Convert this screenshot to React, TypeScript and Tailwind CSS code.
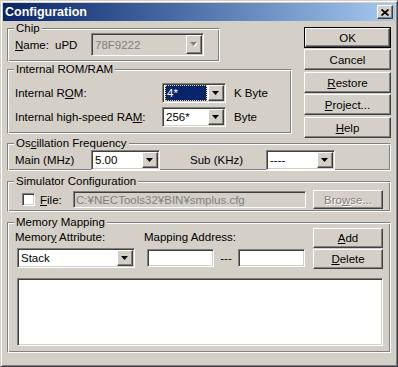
import React from 'react';

const SUNKEN =
  'border border-t-[#808080] border-l-[#808080] border-b-white border-r-white shadow-[inset_1px_1px_0_#404040,inset_-1px_-1px_0_#D4D0C8] p-[1px]';
const RAISED =
  'border border-t-white border-l-white border-b-[#404040] border-r-[#404040] shadow-[inset_-1px_-1px_0_#808080]';
const ETCHED =
  'border border-t-[#808080] border-l-[#808080] border-b-white border-r-white shadow-[inset_1px_1px_0_#fff,inset_-1px_-1px_0_#808080]';
const DISABLED_TEXT = 'text-[#808080] [text-shadow:1px_1px_0_#fff]';

function Arrow({ disabled }: { disabled?: boolean }) {
  return (
    <svg width="8" height="5" viewBox="0 0 8 5" className="block">
      {disabled && <polygon points="1,1 8,1 4.5,5" fill="#fff" />}
      <polygon points="0,0 7,0 3.5,4" fill={disabled ? '#808080' : '#000'} />
    </svg>
  );
}

function Combo({
  className,
  value,
  disabled,
  selected,
}: {
  className: string;
  value: string;
  disabled?: boolean;
  selected?: boolean;
}) {
  return (
    <div className={`${SUNKEN} flex items-stretch ${disabled ? 'bg-[#D4D0C8]' : 'bg-white'} ${className}`}>
      <div className="flex-1 flex items-center pl-[1px] pr-[1px] min-w-0">
        {selected ? (
          <div className="flex-1 h-full flex items-center bg-[#0A246A] text-white border border-dotted border-[#F2D98A] pl-[1px]">
            {value}
          </div>
        ) : (
          <span className={disabled ? 'text-[#808080] pl-[1px]' : 'pl-[1px]'}>{value}</span>
        )}
      </div>
      <div className={`${RAISED} w-[16px] bg-[#D4D0C8] flex items-center justify-center`}>
        <Arrow disabled={disabled} />
      </div>
    </div>
  );
}

function Button({
  className,
  children,
  isDefault,
  disabled,
}: {
  className: string;
  children: React.ReactNode;
  isDefault?: boolean;
  disabled?: boolean;
}) {
  const inner = (
    <div
      className={`${RAISED} h-full flex items-center justify-center bg-[#D4D0C8] ${disabled ? DISABLED_TEXT : ''}`}
    >
      {children}
    </div>
  );
  if (isDefault) {
    return <div className={`border border-black ${className}`}>{inner}</div>;
  }
  return <div className={className}>{inner}</div>;
}

function Group({
  title,
  className,
  innerClass,
  children,
}: {
  title: React.ReactNode;
  className: string;
  innerClass: string;
  children: React.ReactNode;
}) {
  return (
    <div className={`relative pt-[6px] flex flex-col ${className}`}>
      <div className={`${ETCHED} flex-1 ${innerClass}`}>{children}</div>
      <span className="absolute top-0 left-[7px] px-[2px] leading-[12px] bg-[#D4D0C8]">{title}</span>
    </div>
  );
}

export default function App() {
  return (
    <div className="w-[398px] h-[367px] bg-[#D4D0C8] font-['Liberation_Sans',Arial,sans-serif] text-[11.5px] text-black leading-[14px] select-none">
      <div className="w-full h-full border border-t-[#D4D0C8] border-l-[#D4D0C8] border-b-[#404040] border-r-[#404040] shadow-[inset_1px_1px_0_#fff,inset_-1px_-1px_0_#808080] p-[2px] flex flex-col">
        {/* title bar */}
        <div className="h-[18px] flex items-center justify-between bg-linear-to-r from-[#0A246A] to-[#A6CAF0] pl-[2px] pr-[2px]">
          <span className="text-white font-bold text-[12.5px] leading-[18px]">Configuration</span>
          <div className={`${RAISED} w-[16px] h-[14px] bg-[#D4D0C8] flex items-center justify-center`}>
            <svg width="8" height="7" viewBox="0 0 8 7" className="block">
              <path d="M0.5 0.5 L7.5 6.5 M7.5 0.5 L0.5 6.5" stroke="#000" strokeWidth="1.7" />
            </svg>
          </div>
        </div>

        <div className="pt-[1px] px-[4px] flex flex-col">
          {/* top area */}
          <div className="flex items-start gap-[12px] h-[112px]">
            <div className="w-[285px] flex flex-col">
              <Group title="Chip" className="w-[213px] h-[40px]" innerClass="pt-[4px]">
                <div className="flex items-center h-[23px] pl-[7px]">
                  <span className="w-[40px]">
                    <u>N</u>ame:
                  </span>
                  <span className="w-[36px]">uPD</span>
                  <Combo className="w-[113px] h-[23px]" value="78F9222" disabled />
                </div>
              </Group>

              <Group title="Internal ROM/RAM" className="w-[285px] h-[71px] mt-[1px]" innerClass="pt-[13px] flex flex-col gap-[4px]">
                <div className="flex items-center h-[20px] pl-[7px]">
                  <span className="w-[147px]">
                    Internal R<u>O</u>M:
                  </span>
                  <Combo className="w-[64px] h-[20px]" value="4*" selected />
                  <span className="ml-[8px]">K Byte</span>
                </div>
                <div className="flex items-center h-[20px] pl-[7px]">
                  <span className="w-[147px]">
                    Internal high-speed RA<u>M</u>:
                  </span>
                  <Combo className="w-[64px] h-[20px]" value="256*" />
                  <span className="ml-[8px]">Byte</span>
                </div>
              </Group>
            </div>

            <div className="w-[87px] flex flex-col mt-[5px]">
              <Button className="h-[21px]" isDefault>
                OK
              </Button>
              <Button className="h-[21px] mt-[1px]">Cancel</Button>
              <Button className="h-[21px] mt-[2px]">
                <span>
                  <u>R</u>estore
                </span>
              </Button>
              <Button className="h-[21px] mt-[1px]">
                <span>
                  <u>P</u>roject...
                </span>
              </Button>
              <Button className="h-[21px] mt-[2px]">
                <span>
                  <u>H</u>elp
                </span>
              </Button>
            </div>
          </div>

          <Group
            title={
              <span>
                Os<u>c</u>illation Frequency
              </span>
            }
            className="h-[34px] mt-[3px]"
            innerClass="pt-[6px]"
          >
            <div className="flex items-center h-[20px] pl-[7px]">
              <span className="w-[76px]">Main (MHz)</span>
              <Combo className="w-[69px] h-[20px]" value="5.00" />
              <span className="w-[76px] ml-[30px]">Sub (KHz)</span>
              <Combo className="w-[69px] h-[20px]" value="----" />
            </div>
          </Group>

          <Group title="Simulator Configuration" className="h-[37px] mt-[4px]" innerClass="pt-[8px]">
            <div className="flex items-center h-[19px]">
              <div className={`${SUNKEN} ml-[14px] w-[13px] h-[13px] bg-white`} />
              <span className="ml-[5px] w-[33px]">
                <u>F</u>ile:
              </span>
              <div className={`${SUNKEN} w-[233px] h-[17px] bg-[#D4D0C8] flex items-center text-[#808080] pl-[2px]`}>
                C:¥NECTools32¥BIN¥smplus.cfg
              </div>
              <Button className="w-[70px] h-[19px] ml-[7px]" disabled>
                <span>
                  Bro<u>w</u>se...
                </span>
              </Button>
            </div>
          </Group>

          <Group title="Memory Mapping" className="h-[137px] mt-[4px]" innerClass="pt-[5px] flex flex-col">
            <div className="flex">
              <div className="w-[297px] pl-[7px] flex flex-col">
                <div className="flex mt-[2px] h-[14px]">
                  <span className="w-[129px]">
                    Memor<u>y</u> Attribute:
                  </span>
                  <span>
                    Mappin<u>g</u> Address:
                  </span>
                </div>
                <div className="flex items-center mt-[4px] h-[20px]">
                  <Combo className="w-[118px] h-[20px] ml-[2px]" value="Stack" />
                  <div className={`${SUNKEN} w-[67px] h-[18px] ml-[12px] bg-white`} />
                  <span className="w-[24px] text-center">---</span>
                  <div className={`${SUNKEN} w-[67px] h-[18px] bg-white`} />
                </div>
              </div>
              <div className="ml-[8px] w-[70px] flex flex-col">
                <Button className="h-[20px]">
                  <span>
                    <u>A</u>dd
                  </span>
                </Button>
                <Button className="h-[20px] mt-[1px]">
                  <span>
                    <u>D</u>elete
                  </span>
                </Button>
              </div>
            </div>
            <div className={`${SUNKEN} ml-[9px] mt-[9px] w-[366px] h-[68px] bg-white`} />
          </Group>
        </div>
      </div>
    </div>
  );
}
